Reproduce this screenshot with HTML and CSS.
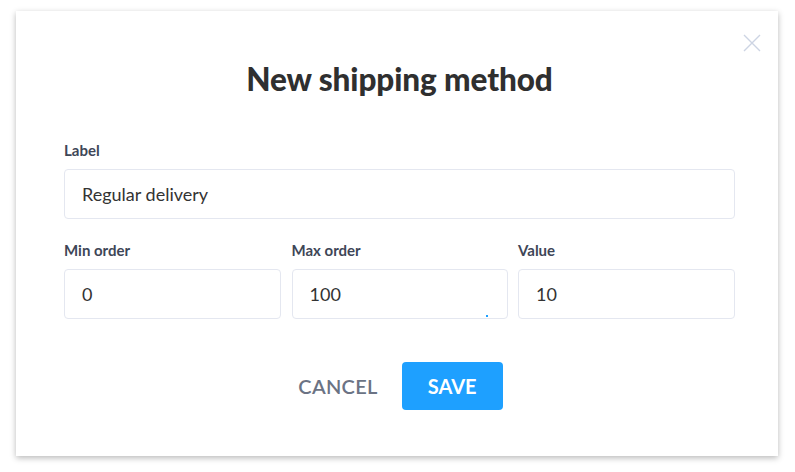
FILE: index.html
```html
<!DOCTYPE html>
<html>
<head>
<meta charset="utf-8">
<link rel="stylesheet" href="styles.css">
</head>
<body>
<div class="dialog">
  <button class="close" aria-label="Close">
    <svg width="18" height="18" viewBox="0 0 18 18"><path d="M1 1L17 17M17 1L1 17" stroke="#cdd4e3" stroke-width="1.4" fill="none"/></svg>
  </button>
  <h1 class="title">New shipping method</h1>
  <div class="field">
    <label class="label">Label</label>
    <div class="input">Regular delivery</div>
  </div>
  <div class="row">
    <div class="field">
      <label class="label">Min order</label>
      <div class="input">0</div>
    </div>
    <div class="field">
      <label class="label">Max order</label>
      <div class="input">100<span class="dot"></span></div>
    </div>
    <div class="field">
      <label class="label">Value</label>
      <div class="input">10</div>
    </div>
  </div>
  <div class="actions">
    <button class="btn cancel">CANCEL</button>
    <button class="btn save">SAVE</button>
  </div>
</div>
</body>
</html>
```
FILE: styles.css
```css
* { box-sizing: border-box; }
html, body { margin: 0; padding: 0; background: #ffffff; }
body {
  padding: 11px 17px 16px 16px;
  font-family: Lato, "Open Sans", sans-serif;
}
.dialog {
  position: relative;
  width: 762px;
  height: 445px;
  background: #fff;
  box-shadow: 0 2px 6px rgba(0,0,0,0.28);
  padding: 0 43px 0 48px;
}
.close {
  position: absolute;
  top: 23px;
  right: 17px;
  border: 0;
  background: none;
  padding: 0;
  width: 18px;
  height: 18px;
}
.close svg { display: block; }
.title {
  margin: 0;
  padding-top: 48px;
  height: 131px;
  text-align: center;
  font-size: 31.5px;
  font-weight: 900;
  color: #2f2f2f;
  line-height: 40px;
  letter-spacing: -0.1px;
}
.field { display: flex; flex-direction: column; }
.label {
  font-size: 15px;
  font-weight: 700;
  color: #3e4657;
  line-height: 17px;
  height: 27px;
}
.input {
  position: relative;
  height: 50px;
  border: 1px solid #e4e7f0;
  border-radius: 4px;
  padding: 0 17px;
  display: flex;
  align-items: center;
  font-size: 18px;
  color: #333;
}
.dot {
  position: absolute;
  left: 193px;
  bottom: 1px;
  width: 2px;
  height: 2px;
  background: #1ea0ff;
}
.row {
  margin-top: 23px;
  display: grid;
  grid-template-columns: 217px 216px 217px;
  column-gap: 10.5px;
}
.actions {
  margin-top: 43px;
  display: flex;
  justify-content: center;
  align-items: center;
  gap: 24px;
  padding-left: 2px;
}
.btn {
  font-family: Lato, "Open Sans", sans-serif;
  font-size: 20px;
  border: 0;
  border-radius: 4px;
  height: 48px;
  cursor: pointer;
}
.cancel {
  background: none;
  color: #6b7384;
  font-weight: 600;
  padding: 0;
  letter-spacing: 0.3px;
}
.save {
  background: #1ea0ff;
  color: #fff;
  font-weight: 700;
  width: 101px;
}
```
